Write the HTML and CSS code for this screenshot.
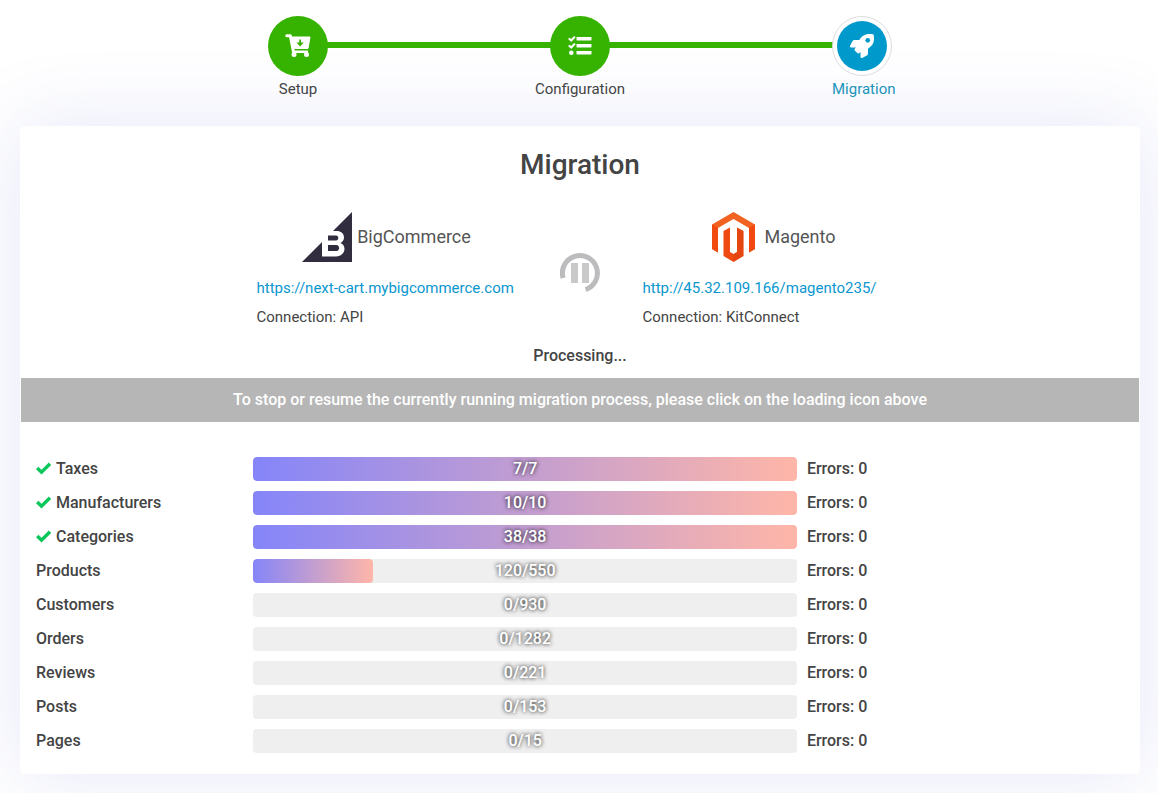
FILE: index.html
```html
<!DOCTYPE html>
<html lang="en">
<head>
<meta charset="utf-8">
<title>Migration</title>
<meta name="viewport" content="width=device-width, initial-scale=1">
<link rel="stylesheet" href="styles.css">
</head>
<body>
<main class="page">
  <ol class="steps">
    <li class="step">
      <span class="step-dot">
        <svg width="26" height="24" viewBox="0 0 26 24" aria-hidden="true">
          <path d="M1.800 1.800H5.300L8.500 18" fill="none" stroke="#fff" stroke-width="3" stroke-linecap="round" stroke-linejoin="round"/>
          <path d="M6 3H25L23 14.500H8.500Z" fill="#fff" stroke="#fff" stroke-linejoin="round"/>
          <path d="M8 16.500H23V19H8Z" fill="#fff"/>
          <circle cx="9" cy="20.500" r="2.500" fill="#fff"/>
          <circle cx="21.500" cy="20.500" r="2.500" fill="#fff"/>
          <path d="M14.300 5.500H16V8.500H18.800L15.150 12.500L11.500 8.500H14.300Z" fill="#36b300"/>
        </svg>
      </span>
      <span class="step-label">Setup</span>
    </li>
    <li class="step-line" aria-hidden="true"></li>
    <li class="step">
      <span class="step-dot">
        <svg width="24" height="20" viewBox="0 0 24 20" aria-hidden="true">
          <g fill="#fff">
            <rect x="8.500" y="1" width="15" height="3.400" rx="0.600"/>
            <rect x="8.500" y="8" width="15" height="3.400" rx="0.600"/>
            <rect x="8.500" y="15" width="15" height="3.400" rx="0.600"/>
            <circle cx="3.300" cy="16.700" r="2.300"/>
          </g>
          <path d="M1.500 3L3.200 4.500L6.300 1.300M1.500 10L3.200 11.500L6.300 8.300" fill="none" stroke="#fff" stroke-width="2.200" stroke-linecap="round" stroke-linejoin="round"/>
        </svg>
      </span>
      <span class="step-label">Configuration</span>
    </li>
    <li class="step-line" aria-hidden="true"></li>
    <li class="step step-current" aria-current="step">
      <span class="step-dot">
        <svg width="24" height="24" viewBox="0 0 512 512" aria-hidden="true">
          <path fill="#fff" d="M505.120 19.094c-1.189-5.531-6.658-11-12.207-12.188C460.716 0 435.507 0 410.407 0 307.175 0 245.269 55.203 199.052 128H94.838c-16.348.016-35.557 11.875-42.887 26.484L2.516 253.297A28.400 28.400 0 0 0 0 264a24.008 24.008 0 0 0 24.006 24h103.842l-22.474 22.469c-11.370 11.365-12.951 32.256 0 45.250l50.904 50.906c11.156 11.188 32.220 13.156 45.277 0L224 384.156V488a24.008 24.008 0 0 0 24 24 28.560 28.560 0 0 0 10.707-2.516l98.728-49.390c14.629-7.297 26.508-26.500 26.508-42.860V312.797c72.590-46.312 128.037-108.406 128.037-211.094.1-25.220.1-50.417-6.860-82.609z"/>
          <circle cx="378" cy="134" r="50" fill="#09c"/>
        </svg>
      </span>
      <span class="step-label">Migration</span>
    </li>
  </ol>

  <section class="card">
    <h1 class="title">Migration</h1>

    <div class="stores">
      <div class="store">
        <div class="store-name">
          <svg width="50" height="50" viewBox="0 0 50 50" aria-hidden="true">
            <path fill="#312c3e" d="M50 0V50H0L20 30V44.500H34C39 44.500 42.500 41 42.500 37C42.500 34 41 32 38.500 31C40.500 30 42 28 42 25.500C42 21.500 39 19 34.500 19H31Z"/>
            <path fill="#312c3e" fill-rule="evenodd" d="M26 23.500H34C37 23.500 37 28.500 34 28.500H26ZM26 33H34.500C38 33 38 39 34.500 39H26Z"/>
          </svg>
          <span>BigCommerce</span>
        </div>
        <a class="store-url" href="https://next-cart.mybigcommerce.com">https://next-cart.mybigcommerce.com</a>
        <p class="store-connection">Connection: API</p>
      </div>

      <button class="toggle" type="button" aria-label="Stop or resume migration">
        <svg width="40" height="40" viewBox="0 0 40 40" aria-hidden="true">
          <path d="M3.100 25A17.500 17.500 0 1 1 25.600 36.600" fill="none" stroke="#bcbcbe" stroke-width="5"/>
          <path d="M11 10H18V30H11ZM22 10H29V30H22Z" fill="#c9c9c9"/>
        </svg>
      </button>

      <div class="store">
        <div class="store-name">
          <svg width="50" height="50" viewBox="0 0 50 50" aria-hidden="true">
            <path fill="#f26322" d="M24.500 0L46 12.500V37L40 40.500V16L24.500 7L9 16V40.500L3 37V12.500Z"/>
            <path fill="#f04a10" d="M3 12.500L9 16V40.500L3 37ZM40 16L46 12.500V37L40 40.500Z"/>
            <path fill="#ef4a12" d="M14.500 19L21 15.500V40L24.500 42L28 40V15.500L34.500 19V44L24.500 50L14.500 44Z"/>
            <path fill="#d63f12" d="M28 15.500L34.500 19V44L24.500 50V42L28 40Z" opacity=".35"/>
          </svg>
          <span>Magento</span>
        </div>
        <a class="store-url" href="http://45.32.109.166/magento235/">http://45.32.109.166/magento235/</a>
        <p class="store-connection">Connection: KitConnect</p>
      </div>
    </div>

    <p class="status">Processing...</p>
    <p class="notice">To stop or resume the currently running migration process, please click on the loading icon above</p>

    <ul class="entities">
      <li class="entity">
        <span class="entity-name"><svg class="check" width="16" height="14" viewBox="0 0 16 14" aria-hidden="true"><path d="M1.200 6L5.500 10.200L14 1.700"/></svg>Taxes</span>
        <span class="bar"><span class="bar-fill" style="width:100%"></span><span class="bar-text">7/7</span></span>
        <span class="errors">Errors: 0</span>
      </li>
      <li class="entity">
        <span class="entity-name"><svg class="check" width="16" height="14" viewBox="0 0 16 14" aria-hidden="true"><path d="M1.200 6L5.500 10.200L14 1.700"/></svg>Manufacturers</span>
        <span class="bar"><span class="bar-fill" style="width:100%"></span><span class="bar-text">10/10</span></span>
        <span class="errors">Errors: 0</span>
      </li>
      <li class="entity">
        <span class="entity-name"><svg class="check" width="16" height="14" viewBox="0 0 16 14" aria-hidden="true"><path d="M1.200 6L5.500 10.200L14 1.700"/></svg>Categories</span>
        <span class="bar"><span class="bar-fill" style="width:100%"></span><span class="bar-text">38/38</span></span>
        <span class="errors">Errors: 0</span>
      </li>
      <li class="entity">
        <span class="entity-name">Products</span>
        <span class="bar"><span class="bar-fill" style="width:22%"></span><span class="bar-text">120/550</span></span>
        <span class="errors">Errors: 0</span>
      </li>
      <li class="entity">
        <span class="entity-name">Customers</span>
        <span class="bar"><span class="bar-text">0/930</span></span>
        <span class="errors">Errors: 0</span>
      </li>
      <li class="entity">
        <span class="entity-name">Orders</span>
        <span class="bar"><span class="bar-text">0/1282</span></span>
        <span class="errors">Errors: 0</span>
      </li>
      <li class="entity">
        <span class="entity-name">Reviews</span>
        <span class="bar"><span class="bar-text">0/221</span></span>
        <span class="errors">Errors: 0</span>
      </li>
      <li class="entity">
        <span class="entity-name">Posts</span>
        <span class="bar"><span class="bar-text">0/153</span></span>
        <span class="errors">Errors: 0</span>
      </li>
      <li class="entity">
        <span class="entity-name">Pages</span>
        <span class="bar"><span class="bar-text">0/15</span></span>
        <span class="errors">Errors: 0</span>
      </li>
    </ul>
  </section>
</main>
</body>
</html>
```
FILE: styles.css
```css
* {
  box-sizing: border-box;
}

body {
  margin: 0;
  background: #fff;
  color: #444;
  font-family: Roboto, "Liberation Sans", sans-serif;
  font-size: 15px;
  line-height: 22px;
}

h1, p, ol, ul {
  margin: 0;
  padding: 0;
}

ol, ul {
  list-style: none;
}

a {
  color: #0a97d0;
  text-decoration: none;
}

.page {
  padding: 16px 18px 19px 20px;
  overflow: hidden;
}

/* Wizard steps */
.steps {
  position: relative;
  z-index: 1;
  display: flex;
  max-width: 624px;
  margin: 0 auto 26px;
}

.step {
  display: flex;
  flex-direction: column;
  align-items: center;
  gap: 2px;
  width: 60px;
  white-space: nowrap;
}

.step-dot {
  display: flex;
  flex: none;
  align-items: center;
  justify-content: center;
  width: 60px;
  height: 60px;
  border-radius: 50%;
  background: #36b300;
}

.step-line {
  flex: 1;
  height: 6px;
  margin: 26px -2px 0;
  background: #36b300;
}

.step-current {
  align-items: flex-start;
  color: #1a93bd;
}

.step-current .step-dot {
  padding: 4px;
  border: 1px solid #ddd;
  background: linear-gradient(#09c, #09c) content-box, linear-gradient(#fff, #fff);
}

/* Migration card */
.card {
  border: 1px solid #fff;
  border-radius: 4px;
  background: #fff;
  box-shadow: 0 0 80px rgba(80, 95, 205, 0.15);
}

.title {
  padding-top: 20px;
  font-size: 28px;
  font-weight: 500;
  line-height: 36px;
  text-align: center;
}

.stores {
  display: grid;
  grid-template-columns: 260px 126px 260px;
  justify-content: center;
  padding: 29px 1px 0 0;
}

.store-name {
  display: flex;
  align-items: center;
  justify-content: center;
  gap: 5px;
  margin-bottom: 15px;
  color: #555;
  font-size: 18px;
}

.store-url {
  display: block;
}

.store-connection {
  padding-top: 7px;
}

.toggle {
  align-self: center;
  justify-self: center;
  display: flex;
  padding: 6px 0 0;
  border: 0;
  background: none;
  cursor: pointer;
}

.status {
  padding: 17px 0 11px;
  font-size: 16px;
  font-weight: 500;
  text-align: center;
}

.notice {
  padding: 11px 15px;
  background: #b6b6b6;
  color: #fff;
  font-size: 16px;
  font-weight: 500;
  text-align: center;
}

/* Per-entity progress */
.entities {
  display: grid;
  gap: 10px;
  padding: 35px 16px 20px 15px;
  font-size: 16px;
  font-weight: 500;
  line-height: 24px;
}

.entity {
  display: grid;
  grid-template-columns: 20% 50% 30%;
}

.entity-name {
  display: flex;
  align-items: center;
  gap: 4px;
}

.check {
  fill: none;
  stroke: #0ac75a;
  stroke-width: 3.4;
}

.bar {
  display: grid;
  overflow: hidden;
  border-radius: 4px;
  background: #efefef;
}

.bar-fill,
.bar-text {
  grid-area: 1 / 1;
}

.bar-fill {
  border-radius: 4px;
  background: linear-gradient(90deg, #8585f9, #ffb6a8);
}

.bar-text {
  color: #fff;
  text-align: center;
  text-shadow: 0 0 4px #000;
}

.errors {
  padding-left: 10px;
}
```
